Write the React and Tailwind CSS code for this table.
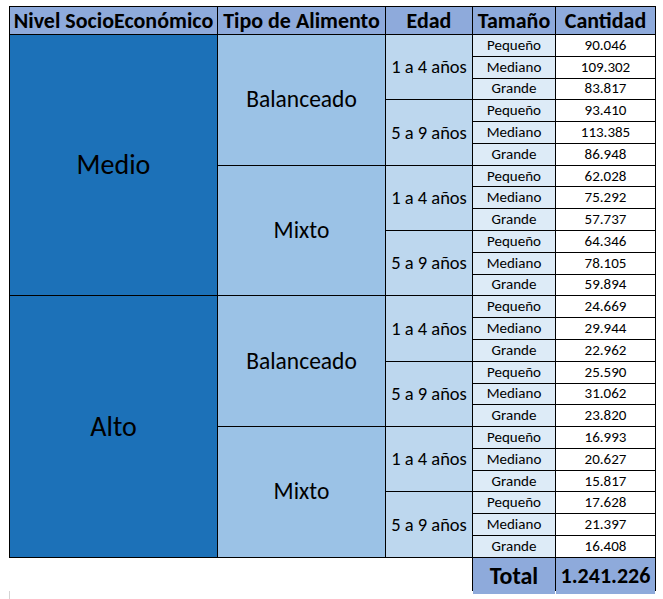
const font = { fontFamily: 'Carlito, Calibri, Lato, "Liberation Sans", sans-serif' }

const data = [
  {
    nivel: 'Medio',
    tipos: [
      { tipo: 'Balanceado', edades: [['90.046', '109.302', '83.817'], ['93.410', '113.385', '86.948']] },
      { tipo: 'Mixto', edades: [['62.028', '75.292', '57.737'], ['64.346', '78.105', '59.894']] },
    ],
  },
  {
    nivel: 'Alto',
    tipos: [
      { tipo: 'Balanceado', edades: [['24.669', '29.944', '22.962'], ['25.590', '31.062', '23.820']] },
      { tipo: 'Mixto', edades: [['16.993', '20.627', '15.817'], ['17.628', '21.397', '16.408']] },
    ],
  },
]

const edades = ['1 a 4 años', '5 a 9 años']
const tamanos = ['Pequeño', 'Mediano', 'Grande']

function Head({ children }) {
  return (
    <div className="bg-[#8eaadb] flex items-center justify-center text-[22px] font-bold leading-none whitespace-nowrap">
      {children}
    </div>
  )
}

export default function App() {
  const cells = []
  data.forEach((n) => {
    n.tipos.forEach((t, ti) => {
      t.edades.forEach((vals, ei) => {
        vals.forEach((v, si) => {
          if (ti === 0 && ei === 0 && si === 0) {
            cells.push(
              <div key={n.nivel} className="row-span-12 bg-[#1c71b8] flex items-center justify-center text-[28px]">
                {n.nivel}
              </div>
            )
          }
          if (ei === 0 && si === 0) {
            cells.push(
              <div key={n.nivel + t.tipo} className="row-span-6 bg-[#9bc2e6] flex items-center justify-center text-[23.5px]">
                {t.tipo}
              </div>
            )
          }
          if (si === 0) {
            cells.push(
              <div key={n.nivel + t.tipo + ei} className="row-span-3 bg-[#bdd7ee] flex items-center justify-center text-[18.5px] whitespace-nowrap">
                {edades[ei]}
              </div>
            )
          }
          cells.push(
            <div key={n.nivel + t.tipo + ei + 's' + si} className="bg-[#ddebf7] flex items-center justify-center text-[15px] leading-none">
              {tamanos[si]}
            </div>
          )
          cells.push(
            <div key={n.nivel + t.tipo + ei + 'v' + si} className="bg-white flex items-center justify-center text-[15px] leading-none">
              {v}
            </div>
          )
        })
      })
    })
  })

  return (
    <div className="bg-white w-[663px] h-[599px] pt-[6px] pl-[9px] text-black" style={font}>
      <div className="w-[647px] grid grid-cols-[207px_167px_86px_82px_99px] grid-rows-[27px_repeat(24,20.79px)] gap-px bg-black p-px">
        <Head>Nivel SocioEconómico</Head>
        <Head>Tipo de Alimento</Head>
        <Head>Edad</Head>
        <Head>Tamaño</Head>
        <Head>Cantidad</Head>
        {cells}
      </div>
      <div className="w-[647px] flex justify-end">
        <div className="grid grid-cols-[82px_99px] h-[33px] gap-px bg-black px-px pb-px">
          <div className="bg-[#8eaadb] flex items-center justify-center text-[24px] font-bold">Total</div>
          <div className="bg-[#8eaadb] flex items-center justify-center text-[22px] font-bold">1.241.226</div>
        </div>
      </div>
      <div className="w-px h-[8px] bg-[#d4d4d4]" />
    </div>
  )
}
